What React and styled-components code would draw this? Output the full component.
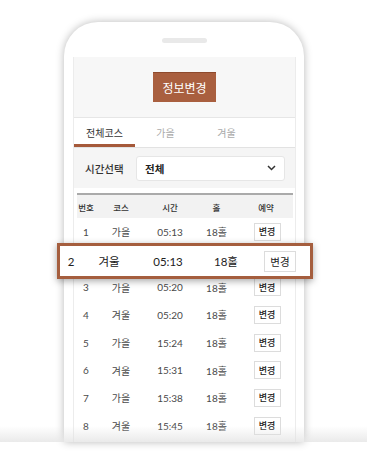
import React from "react";
import styled, { createGlobalStyle } from "styled-components";

const Global = createGlobalStyle`
  html, body { margin: 0; padding: 0; background: #fff; }
  body { font-family: Lato, "Noto Sans CJK KR", sans-serif; }
  * { box-sizing: border-box; }
`;

const Page = styled.div`
  position: relative;
  width: 367px;
  height: 459px;
  overflow: hidden;
  background: #fff;
  padding: 22px 0 0 64px;
`;

const Phone = styled.div`
  width: 240px;
  height: 420px;
  background: #fff;
  border-radius: 34px 34px 0 0;
  box-shadow: 0 0 9px rgba(0, 0, 0, 0.28);
  display: flex;
  flex-direction: column;
  overflow: hidden;
`;

const Top = styled.div`
  height: 35px;
  display: flex;
  justify-content: center;
  padding-top: 16px;
  padding-left: 1px;
`;

const Speaker = styled.div`
  width: 45px;
  height: 5px;
  border-radius: 3px;
  background: #e9e9e9;
`;

const Screen = styled.div`
  flex: 1;
  margin: 0 8px 0 9px;
  border-left: 1px solid #ececec;
  border-right: 1px solid #ececec;
  display: flex;
  flex-direction: column;
  background: #fff;
`;

const Header = styled.div`
  height: 61px;
  background: #f7f7f7;
  display: flex;
  align-items: center;
  justify-content: center;
  border-bottom: 1px solid #e6e6e6;
`;

const InfoButton = styled.div`
  width: 63px;
  height: 30px;
  background: #a95f3f;
  border-top: 1px solid #8e4a2d;
  color: #fff;
  font-size: 12px;
  display: flex;
  align-items: center;
  justify-content: center;
`;

const Tabs = styled.div`
  height: 30px;
  display: flex;
  border-bottom: 1px solid #e2e2e2;
`;

const Tab = styled.div`
  width: 61px;
  display: flex;
  align-items: center;
  justify-content: center;
  font-size: 10px;
  color: ${(p) => (p.$active ? "#333" : "#aaa")};
  border-bottom: 3px solid ${(p) => (p.$active ? "#a5593a" : "transparent")};
  padding-top: 2px;
`;

const Filter = styled.div`
  height: 40px;
  background: #f5f5f5;
  display: flex;
  align-items: center;
  padding: 0 10px 0 11px;
`;

const FilterLabel = styled.div`
  width: 51px;
  font-size: 10.5px;
  color: #333;
  font-weight: 500;
`;

const Select = styled.div`
  flex: 1;
  height: 25px;
  background: #fff;
  border: 1px solid #e6e6e6;
  border-radius: 3px;
  display: flex;
  align-items: center;
  justify-content: space-between;
  padding: 0 8px 0 8px;
  font-size: 10.5px;
  font-weight: 700;
  color: #222;
`;

const Table = styled.div`
  margin: 5px 2px 0 3px;
  display: flex;
  flex-direction: column;
`;

const cols = "18px 52px 46px 47px 52px";

const HeadRow = styled.div`
  display: grid;
  grid-template-columns: ${cols};
  height: 25px;
  background: #f2f2f2;
  border-top: 2px solid #aaa;
  align-items: center;
  font-size: 8.5px;
  font-weight: 500;
  color: #333;
`;

const Row = styled.div`
  display: grid;
  grid-template-columns: ${cols};
  height: 27.7px;
  align-items: center;
  font-size: 10px;
  color: #4a4a4a;
  visibility: ${(p) => (p.$covered ? "hidden" : "visible")};
`;

const Cell = styled.div`
  text-align: center;
  white-space: nowrap;
`;

const SmallBtn = styled.div`
  justify-self: center;
  width: 27px;
  height: 18px;
  border: 1px solid #dcdcdc;
  background: #fff;
  font-size: 9px;
  font-weight: 500;
  color: #222;
  display: flex;
  align-items: center;
  justify-content: center;
  margin-left: 2px;
`;

const Highlight = styled.div`
  position: absolute;
  left: 57px;
  top: 243px;
  width: 256px;
  height: 36px;
  background: #fff;
  border: 3px solid #a55e3e;
  box-shadow: 0 2px 7px rgba(0, 0, 0, 0.35);
  display: grid;
  grid-template-columns: 22px 54px 64px 52px 58px;
  align-items: center;
  font-size: 11.5px;
  color: #222;
`;

const BigBtn = styled.div`
  justify-self: start;
  margin-left: 12px;
  width: 32px;
  height: 21px;
  border: 1px solid #dcdcdc;
  background: #fff;
  font-size: 10.5px;
  color: #222;
  display: flex;
  align-items: center;
  justify-content: center;
`;

const Fade = styled.div`
  position: absolute;
  left: 0;
  right: 0;
  top: 426px;
  height: 16px;
  background: linear-gradient(to bottom, rgba(230, 230, 230, 0), rgba(225, 225, 225, 0.7));
  pointer-events: none;
`;

const rows = [
  [1, "가을", "05:13"],
  [2, "겨울", "05:13"],
  [3, "가을", "05:20"],
  [4, "겨울", "05:20"],
  [5, "가을", "15:24"],
  [6, "겨울", "15:31"],
  [7, "가을", "15:38"],
  [8, "겨울", "15:45"],
];

export default function App() {
  return (
    <>
      <Global />
      <Page>
        <Phone>
          <Top>
            <Speaker />
          </Top>
          <Screen>
            <Header>
              <InfoButton>정보변경</InfoButton>
            </Header>
            <Tabs>
              <Tab $active>전체코스</Tab>
              <Tab>가을</Tab>
              <Tab>겨울</Tab>
            </Tabs>
            <Filter>
              <FilterLabel>시간선택</FilterLabel>
              <Select>
                <span>전체</span>
                <svg width="9" height="6" viewBox="0 0 9 6">
                  <path d="M1 1 L4.5 4.5 L8 1" fill="none" stroke="#333" strokeWidth="1.5" />
                </svg>
              </Select>
            </Filter>
            <Table>
              <HeadRow>
                <Cell>번호</Cell>
                <Cell>코스</Cell>
                <Cell>시간</Cell>
                <Cell>홀</Cell>
                <Cell>예약</Cell>
              </HeadRow>
              {rows.map(([n, c, t]) => (
                <Row key={n} $covered={n === 2}>
                  <Cell>{n}</Cell>
                  <Cell>{c}</Cell>
                  <Cell>{t}</Cell>
                  <Cell>18홀</Cell>
                  <SmallBtn>변경</SmallBtn>
                </Row>
              ))}
            </Table>
          </Screen>
        </Phone>
        <Highlight>
          <Cell>2</Cell>
          <Cell>겨울</Cell>
          <Cell>05:13</Cell>
          <Cell>18홀</Cell>
          <BigBtn>변경</BigBtn>
        </Highlight>
        <Fade />
      </Page>
    </>
  );
}
